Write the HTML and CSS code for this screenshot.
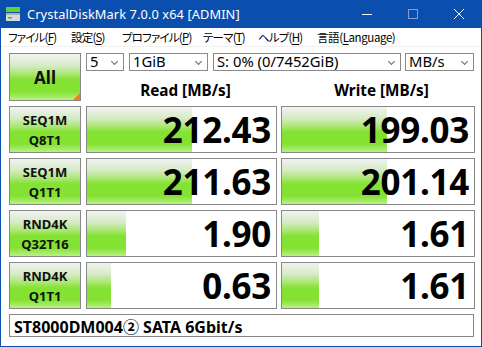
FILE: index.html
```html
<!DOCTYPE html>
<html>
<head>
<meta charset="utf-8">
<link rel="stylesheet" href="styles.css">
</head>
<body>
<div class="window">
  <div class="titlebar">
    <svg class="appicon" width="16" height="16" viewBox="0 0 16 16">
      <rect x="1" y="1" width="14" height="5" fill="#5fcf3a"/>
      <rect x="1" y="7" width="14" height="8" fill="#d9d9d9"/>
      <rect x="1" y="7" width="14" height="2" fill="#b0b0b0"/>
      <rect x="3" y="11" width="4" height="1.5" fill="#3bb34a"/>
    </svg>
    <span class="title">CrystalDiskMark 7.0.0 x64 [ADMIN]</span>
    <div class="controls">
      <svg width="46" height="28" viewBox="0 0 46 28"><line x1="18" y1="14.5" x2="28" y2="14.5" stroke="#fff" stroke-width="1"/></svg>
      <svg width="46" height="28" viewBox="0 0 46 28"><rect x="18.5" y="9.5" width="9" height="9" fill="none" stroke="#7f9fd3" stroke-width="1"/></svg>
      <svg width="46" height="28" viewBox="0 0 46 28"><path d="M18 9 L28 19 M28 9 L18 19" stroke="#fff" stroke-width="1"/></svg>
    </div>
  </div>
  <div class="menubar">
    <span class="mi m1">ファイル(<u>F</u>)</span>
    <span class="mi m2">設定(<u>S</u>)</span>
    <span class="mi m3">プロファイル(<u>P</u>)</span>
    <span class="mi m4">テーマ(<u>T</u>)</span>
    <span class="mi m5">ヘルプ(<u>H</u>)</span>
    <span class="mi m6">言語(<u>L</u>anguage)</span>
  </div>
  <div class="client">
    <div class="top">
      <div class="btn all">All<span class="corner"></span></div>
      <div class="topright">
        <div class="combos">
          <div class="combo c1">5<span class="chev"></span></div>
          <div class="combo c2">1GiB<span class="chev"></span></div>
          <div class="combo c3">S: 0% (0/7452GiB)<span class="chev"></span></div>
          <div class="combo c4">MB/s<span class="chev"></span></div>
        </div>
        <div class="heads">
          <div class="head">Read [MB/s]</div>
          <div class="head">Write [MB/s]</div>
        </div>
      </div>
    </div>
    <div class="grid">
      <div class="btn label">SEQ1M<br>Q8T1</div>
      <div class="cell"><div class="bar" style="width:105px"></div><span class="val">212.43</span></div>
      <div class="cell"><div class="bar" style="width:105px"></div><span class="val">199.03</span></div>

      <div class="btn label">SEQ1M<br>Q1T1</div>
      <div class="cell"><div class="bar" style="width:105px"></div><span class="val">211.63</span></div>
      <div class="cell"><div class="bar" style="width:105px"></div><span class="val">201.14</span></div>

      <div class="btn label">RND4K<br>Q32T16</div>
      <div class="cell"><div class="bar" style="width:39px"></div><span class="val">1.90</span></div>
      <div class="cell"><div class="bar" style="width:37px"></div><span class="val">1.61</span></div>

      <div class="btn label">RND4K<br>Q1T1</div>
      <div class="cell"><div class="bar" style="width:24px"></div><span class="val">0.63</span></div>
      <div class="cell"><div class="bar" style="width:37px"></div><span class="val">1.61</span></div>
    </div>
    <div class="status">ST8000DM004② SATA 6Gbit/s</div>
  </div>
</div>
</body>
</html>
```
FILE: styles.css
```css
* { box-sizing: border-box; }
html, body { margin: 0; padding: 0; }
body {
  width: 482px;
  height: 347px;
  overflow: hidden;
  background: #fff;
  font-family: "Noto Sans", "Noto Sans CJK JP", sans-serif;
}
.window {
  width: 482px;
  height: 347px;
  border: 1px solid #0b4fae;
  border-top: none;
  display: flex;
  flex-direction: column;
}
.titlebar {
  height: 28px;
  background: #0b4fae;
  display: flex;
  align-items: center;
  color: #fff;
  margin: 0 -1px;
  padding-left: 5px;
}
.appicon { flex: none; }
.title {
  font-size: 12.8px;
  margin-left: 6px;
  letter-spacing: 0.1px;
  flex: 1;
}
.controls { display: flex; }
.controls svg { display: block; }
.menubar {
  height: 19px;
  background: #fff;
  display: flex;
  align-items: center;
  padding-left: 7px;
  font-family: "Noto Sans CJK JP", sans-serif;
  font-feature-settings: "palt";
  font-size: 11.5px;
  letter-spacing: -0.8px;
  color: #000;
  border-bottom: 1px solid #f0f0f0;
  white-space: nowrap;
}
.mi { flex: none; }
.mi u { text-decoration-thickness: 1px; text-underline-offset: 2px; }
.m1 { width: 63px; }
.m2 { width: 51px; }
.m3 { width: 81px; }
.m4 { width: 55px; }
.m5 { width: 59px; }
.m6 { letter-spacing: -0.4px; }
.client {
  flex: 1;
  background: #fff;
  padding: 6px 6px 0 8px;
  display: flex;
  flex-direction: column;
}
.top { display: flex; height: 48px; }
.btn {
  border: 1px solid #888;
  background: linear-gradient(to bottom, #f1f3f1 0%, #d6ebc6 25%, #a6e66a 45%, #84e232 55%, #84e232 82%, #b9f183 100%);
  color: #111;
  font-weight: bold;
  display: flex;
  align-items: center;
  justify-content: center;
  text-align: center;
}
.all {
  width: 72px;
  height: 48px;
  font-size: 17px;
  position: relative;
  flex: none;
}
.corner {
  position: absolute;
  right: 0;
  bottom: 0;
  width: 0;
  height: 0;
  border-left: 7px solid transparent;
  border-bottom: 7px solid #ff7a10;
}
.topright {
  margin-left: 5px;
  display: flex;
  flex-direction: column;
  width: 388px;
}
.combos { display: flex; height: 18px; }
.combo {
  height: 18px;
  border: 1px solid #8a8a8a;
  background: #fff;
  font-size: 14.8px;
  line-height: 15px;
  padding-left: 3px;
  position: relative;
  color: #000;
  white-space: nowrap;
}
.chev {
  position: absolute;
  right: 6px;
  top: 5px;
  width: 5px;
  height: 5px;
  border-right: 1px solid #666;
  border-bottom: 1px solid #666;
  transform: rotate(45deg);
}
.c1 { width: 38px; }
.c2 { width: 79px; margin-left: 5px; }
.c3 { width: 188px; margin-left: 5px; }
.c4 { width: 69px; margin-left: 4px; }
.heads {
  display: grid;
  grid-template-columns: 191px 193px;
  column-gap: 4px;
  flex: 1;
}
.head {
  font-weight: bold;
  font-size: 15.3px;
  text-align: center;
  padding-top: 10px;
  padding-left: 8px;
  color: #000;
  line-height: 18px;
}
.grid {
  margin-top: 5px;
  display: grid;
  grid-template-columns: 72px 191px 193px;
  grid-auto-rows: 47px;
  column-gap: 5px;
  row-gap: 5px;
}
.grid .cell:nth-child(3n) { margin-left: -1px; }
.label {
  font-size: 13px;
  line-height: 20px;
}
.cell {
  border: 1px solid #888;
  background: #fff;
  position: relative;
  display: flex;
  align-items: center;
  justify-content: flex-end;
  padding-right: 5px;
}
.bar {
  position: absolute;
  left: 0;
  top: 0;
  bottom: 0;
  background: linear-gradient(to bottom, #f1f3f1 0%, #d6ebc6 25%, #a6e66a 45%, #84e232 55%, #84e232 82%, #b9f183 100%);
}
.val {
  position: relative;
  font-size: 35px;
  font-weight: bold;
  color: #000;
  letter-spacing: -0.3px;
  line-height: 1;
}
.status {
  margin-top: 5px;
  height: 23px;
  width: 465px;
  border: 1px solid #888;
  font-weight: bold;
  font-size: 16px;
  padding-left: 4px;
  display: flex;
  align-items: center;
  color: #000;
}
```
